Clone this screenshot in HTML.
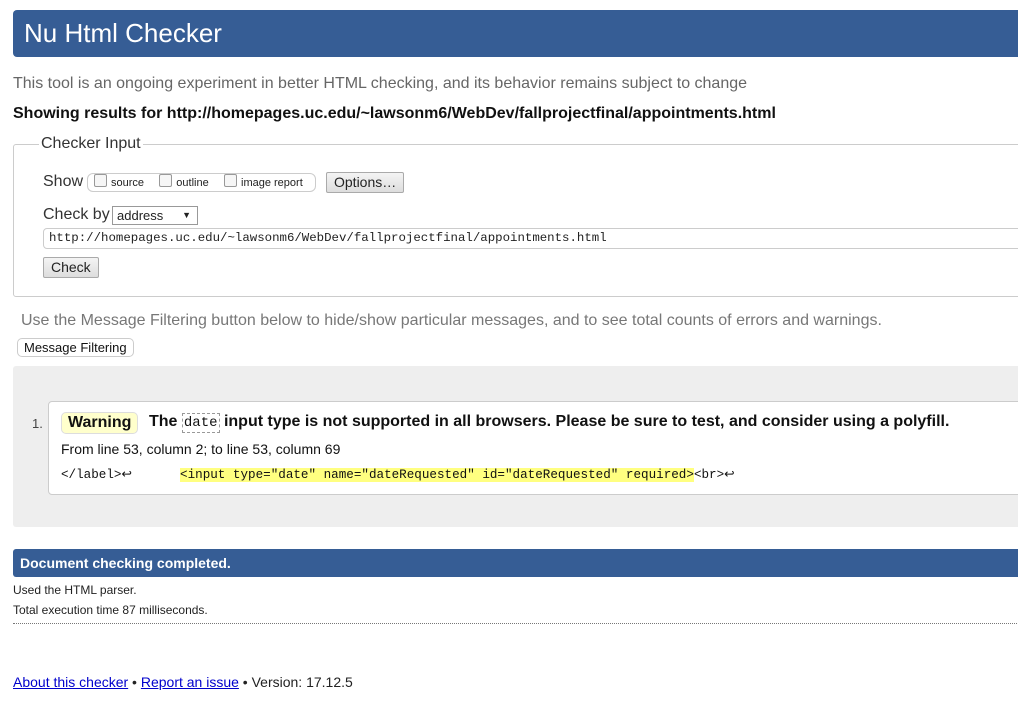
<!DOCTYPE html>
<html><head><meta charset="utf-8"><style>
body{margin:0;width:1018px;height:716px;overflow:hidden;background:#fff;font-family:"Liberation Sans",Arial,sans-serif;color:#222;position:relative}
.a{position:absolute;white-space:nowrap}
.mono{font-family:"Liberation Mono",monospace}
.btn{position:absolute;border:1px solid #aaa;border-radius:2px;background:linear-gradient(#f4f4f4,#ddd);font-size:14px;padding:0 7px;line-height:19px}
.cb{display:inline-block;width:11px;height:11px;border:1px solid #999;border-radius:2px;background:#f6f6f6;vertical-align:-1px;margin-right:4px}
</style></head><body>
<div class="a" style="left:13px;top:10px;width:1100px;height:47px;background:#365d95;border-radius:4px"></div>
<div class="a" style="left:24px;top:18px;font-size:26px;color:#fff">Nu Html Checker</div>
<div class="a" style="left:13px;top:75px;font-size:16px;color:#666">This tool is an ongoing experiment in better HTML checking, and its behavior remains subject to change</div>
<div class="a" style="left:13px;top:105px;font-size:16px;font-weight:bold;color:#111">Showing results for http://homepages.uc.edu/~lawsonm6/WebDev/fallprojectfinal/appointments.html</div>
<div class="a" style="left:13px;top:144px;width:1100px;height:151px;border:1px solid #ccc;border-radius:3px"></div>
<div class="a" style="left:39px;top:135px;font-size:16px;background:#fff;padding:0 2px;color:#333">Checker Input</div>
<div class="a" style="left:43px;top:173px;font-size:16px;color:#333">Show</div>
<div class="a" style="left:87px;top:173px;width:221px;height:17px;border:1px solid #ccc;border-radius:6px;font-size:11px;line-height:17px;padding-left:6px"><span class="cb"></span>source &nbsp;&nbsp;&nbsp;&nbsp;<span class="cb"></span>outline &nbsp;&nbsp;&nbsp;&nbsp;<span class="cb"></span>image report</div>
<div class="btn" style="left:326px;top:172px">Options…</div>
<div class="a" style="left:43px;top:206px;font-size:16px;color:#333">Check by</div>
<div class="a" style="left:112px;top:206px;width:80px;height:17px;border:1px solid #999;font-size:13px;line-height:17px;padding-left:4px">address<span style="position:absolute;right:6px;font-size:9px">▼</span></div>
<div class="a mono" style="left:43px;top:228px;width:1100px;height:19px;border:1px solid #ccc;border-radius:4px;font-size:12.4px;line-height:19px;padding-left:5px">http://homepages.uc.edu/~lawsonm6/WebDev/fallprojectfinal/appointments.html</div>
<div class="btn" style="left:43px;top:257px">Check</div>
<div class="a" style="left:21px;top:312px;font-size:16px;color:#777">Use the Message Filtering button below to hide/show particular messages, and to see total counts of errors and warnings.</div>
<div class="a" style="left:17px;top:338px;border:1px solid #ccc;border-radius:5px;font-size:13px;line-height:17px;padding:0 6px;color:#111">Message Filtering</div>
<div class="a" style="left:13px;top:366px;width:1100px;height:161px;background:#eee;border-radius:3px"></div>
<div class="a" style="left:32px;top:416px;font-size:13px;color:#444">1.</div>
<div class="a" style="left:48px;top:401px;width:1100px;height:92px;background:#fff;border:1px solid #ccc;border-radius:4px"></div>
<div class="a" style="left:61px;top:412px;height:20px;padding:0 6px;background:#ffffcc;border:1px solid #ddd;border-radius:5px;font-size:16px;font-weight:bold;line-height:20px;color:#111">Warning</div>
<div class="a" style="left:149px;top:413px;font-size:16px;font-weight:bold;color:#111">The <span class="mono" style="font-weight:normal;font-size:14px;border:1px dashed #999;padding:1px 1px">date</span> input type is not supported in all browsers. Please be sure to test, and consider using a polyfill.</div>
<div class="a" style="left:61px;top:441px;font-size:14px;color:#111">From line 53, column 2; to line 53, column 69</div>
<div class="a mono" style="left:61px;top:466px;font-size:12.6px;color:#111">&lt;/label&gt;↩<span style="display:inline-block;width:48px"></span><span style="background:#ffff80">&lt;input type="date" name="dateRequested" id="dateRequested" required&gt;</span>&lt;br&gt;↩</div>
<div class="a" style="left:13px;top:549px;width:1100px;height:28px;background:#365d95;border-radius:3px"></div>
<div class="a" style="left:20px;top:555px;font-size:14px;font-weight:bold;color:#fff">Document checking completed.</div>
<div class="a" style="left:13px;top:583px;font-size:12px;color:#222">Used the HTML parser.</div>
<div class="a" style="left:13px;top:603px;font-size:12px;color:#222">Total execution time 87 milliseconds.</div>
<div class="a" style="left:13px;top:623px;width:1100px;border-top:1px dotted #777"></div>
<div class="a" style="left:13px;top:674px;font-size:14px;color:#222"><span style="color:#00c;text-decoration:underline">About this checker</span> • <span style="color:#00c;text-decoration:underline">Report an issue</span> • Version: 17.12.5</div>
</body></html>
